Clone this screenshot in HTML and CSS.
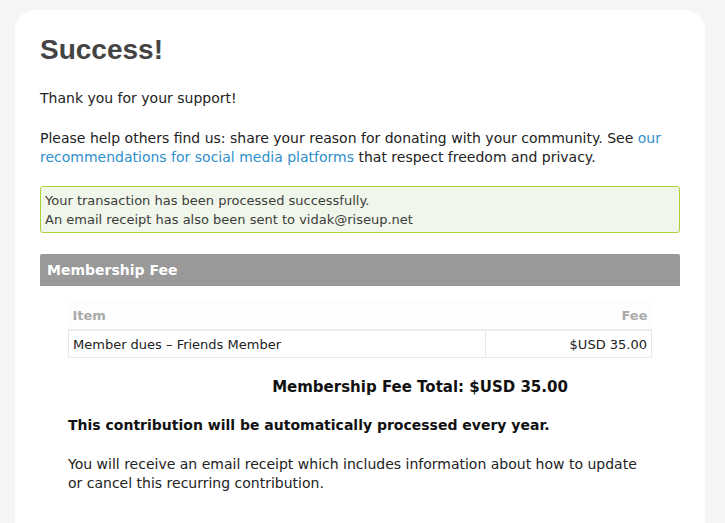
FILE: index.html
```html
<!DOCTYPE html>
<html>
<head>
<meta charset="utf-8">
<link rel="stylesheet" href="styles.css">
</head>
<body>
<div class="card">
  <h1 class="title">Success!</h1>
  <p class="text">Thank you for your support!</p>
  <p class="text share">Please help others find us: share your reason for donating with your community. See <a class="link" href="#">our recommendations for social media platforms</a> that respect freedom and privacy.</p>
  <div class="alert">
    <div>Your transaction has been processed successfully.</div>
    <div>An email receipt has also been sent to vidak@riseup.net</div>
  </div>
  <div class="section-bar">Membership Fee</div>
  <div class="section-body">
    <table class="fees">
      <thead>
        <tr><th class="col-item">Item</th><th class="col-fee">Fee</th></tr>
      </thead>
      <tbody>
        <tr><td class="col-item">Member dues – Friends Member</td><td class="col-fee">$USD 35.00</td></tr>
      </tbody>
    </table>
    <div class="total">Membership Fee Total: $USD 35.00</div>
    <p class="recurring">This contribution will be automatically processed every year.</p>
    <p class="text last">You will receive an email receipt which includes information about how to update or cancel this recurring contribution.</p>
  </div>
</div>
</body>
</html>
```
FILE: styles.css
```css
html, body {
  margin: 0;
  padding: 0;
  background: #f5f5f5;
}
body {
  padding: 10px 20px 0 15px;
  font-family: "DejaVu Sans", sans-serif;
  font-size: 14px;
  line-height: 19px;
  color: #222;
  overflow: hidden;
  height: 523px;
  box-sizing: border-box;
}
.card {
  background: #fff;
  border-radius: 20px 20px 0 0;
  padding: 23px 25px 20px 25px;
  height: 100%;
  box-sizing: border-box;
}
.title {
  font-family: "Liberation Sans", Arial, sans-serif;
  font-size: 28px;
  line-height: 34px;
  font-weight: bold;
  color: #444;
  margin: 0 0 22px 0;
}
.text {
  margin: 0 0 21px 0;
}
.text.share {
  margin-bottom: 19px;
}
.text.last {
  margin: 0;
}
.link {
  color: #2f8fcc;
  text-decoration: none;
}
.alert {
  border: 1px solid #a9d234;
  background: #f0f6ea;
  border-radius: 3px;
  padding: 4px 4px 3px 4px;
  font-size: 13px;
  line-height: 19px;
  color: #3c3c3c;
  margin: 0 0 21px 0;
}
.section-bar {
  background: #999;
  color: #fff;
  font-weight: bold;
  font-size: 14px;
  line-height: 32px;
  padding: 0 7px;
  border-radius: 2px 2px 0 0;
}
.section-body {
  padding: 15px 28px 0 28px;
}
.fees {
  width: 100%;
  border-collapse: collapse;
  font-size: 13px;
}
.fees th {
  background: #fdfdfd;
  color: #aaa;
  font-weight: bold;
  height: 28px;
  padding: 0 4px;
  border-bottom: 2px solid #eee;
}
.fees td {
  border: 1px solid #e8e8e8;
  height: 26px;
  padding: 0 4px;
  color: #222;
}
.col-item { text-align: left; }
.col-fee { text-align: right; width: 157px; }
.total {
  padding-left: 120px;
  text-align: center;
  font-weight: bold;
  font-size: 15px;
  line-height: 22px;
  margin: 18px 0 18px 0;
  color: #111;
}
.recurring {
  font-weight: bold;
  margin: 0 0 20px 0;
  color: #111;
}
```
